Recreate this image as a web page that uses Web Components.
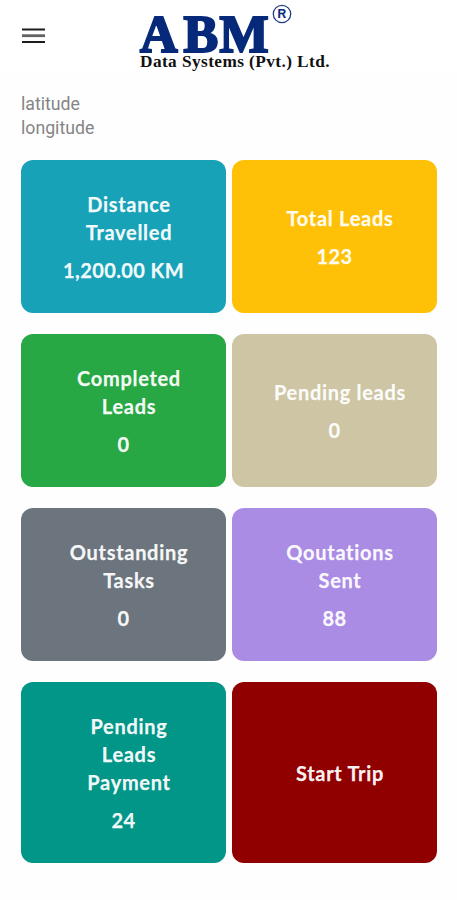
<!DOCTYPE html>
<html lang="en">
<head>
<meta charset="utf-8">
<title>Dashboard</title>
<style>
    body {
        margin: 0;
        background: #fefefe;
        font-family: Lato, "Open Sans", sans-serif;
    }
</style>
</head>
<body>
<lead-dashboard></lead-dashboard>
<script>
function define(name, html) {
    const template = document.createElement('template');
    template.innerHTML = html;

    customElements.define(
        name,
        class extends HTMLElement {
            constructor() {
                super();

                this.attachShadow({ mode: 'open' });
                this.shadowRoot.appendChild(template.content.cloneNode(true));
            }
        }
    );
}

define('menu-button', `
    <style>
        :host {
            display: block;
            width: 24px;
            height: 17px;
        }
        svg {
            display: block;
        }
    </style>
    <svg width="24" height="17" viewBox="0 0 24 17" role="img" aria-label="Menu">
        <path d="M0 1.5h23M0 14h23" stroke="#1c1c1c" stroke-width="2.1" />
        <path d="M0 7.7h23" stroke="#626262" stroke-width="2.8" />
    </svg>
`);

define('brand-logo', `
    <style>
        :host {
            display: block;
        }
        svg {
            display: block;
        }
        text {
            font-family: "Liberation Serif", serif;
            font-weight: bold;
        }
        .name, .mark {
            fill: #06297a;
            stroke: #06297a;
        }
        .mark {
            font-family: "Liberation Sans", sans-serif;
        }
    </style>
    <svg width="194" height="72" viewBox="0 0 194 72">
        <text class="name" x="1 44.5 80.5" y="52" font-size="52" stroke-width="2.2">ABM</text>
        <circle cx="143" cy="14" r="8.7" fill="none" stroke="#233f86" stroke-width="1.3" />
        <text class="mark" x="138.4" y="18.3" font-size="12" stroke-width="0.1">R</text>
        <text x="1" y="67.3" font-size="16" letter-spacing="0.4" fill="#111" textLength="190" lengthAdjust="spacingAndGlyphs">Data Systems (Pvt.) Ltd.</text>
    </svg>
`);

define('app-header', `
    <style>
        :host {
            display: flex;
            align-items: flex-start;
            height: 72px;
            box-sizing: border-box;
            padding-left: 22px;
            background: #fff;
        }
        menu-button {
            margin-top: 28px;
        }
        brand-logo {
            margin-left: 93px;
        }
    </style>
    <menu-button></menu-button>
    <brand-logo></brand-logo>
`);

define('location-info', `
    <style>
        :host {
            display: block;
            height: 68px;
            box-sizing: border-box;
            padding: 20px 21px 0;
            font: 17.7px/24px Roboto, sans-serif;
            color: #858585;
        }
    </style>
    <slot></slot>
`);

define('stat-card', `
    <style>
        :host {
            display: flex;
            flex-direction: column;
            justify-content: center;
            align-items: center;
            gap: 10px;
            box-sizing: border-box;
            padding: 31px 0 30px;
            border-radius: 12px;
            background: var(--card-color);
            color: #fffffff2;
            font-size: 20px;
            font-weight: bold;
            line-height: 28px;
            text-align: center;
            -webkit-text-stroke: 0.25px #fffffff2;
        }
        .title {
            padding-left: 11px;
            letter-spacing: 0.7px;
        }
        .value {
            display: block;
            letter-spacing: 0.4px;
        }
        :host([action]) .value {
            display: none;
        }
    </style>
    <div class="title"><slot></slot></div>
    <slot class="value" name="value"></slot>
`);

define('lead-dashboard', `
    <style>
        :host {
            display: block;
        }
        main {
            display: grid;
            grid-template-columns: 205px 205px;
            grid-template-rows: repeat(3, 153px) 181px;
            gap: 21px 6px;
            padding: 20px 21px 0;
        }
    </style>
    <app-header></app-header>
    <location-info>
        <div>latitude</div>
        <div>longitude</div>
    </location-info>
    <main>
        <stat-card style="--card-color: #17a2b8">Distance<br>Travelled<span slot="value">1,200.00 KM</span></stat-card>
        <stat-card style="--card-color: #ffc107">Total Leads<span slot="value">123</span></stat-card>
        <stat-card style="--card-color: #28a745">Completed<br>Leads<span slot="value">0</span></stat-card>
        <stat-card style="--card-color: #cdc5a3">Pending leads<span slot="value">0</span></stat-card>
        <stat-card style="--card-color: #6c757d">Outstanding<br>Tasks<span slot="value">0</span></stat-card>
        <stat-card style="--card-color: #aa8ce4">Qoutations<br>Sent<span slot="value">88</span></stat-card>
        <stat-card style="--card-color: #029688">Pending<br>Leads<br>Payment<span slot="value">24</span></stat-card>
        <stat-card action style="--card-color: #900000">Start Trip</stat-card>
    </main>
`);
</script>
</body>
</html>
